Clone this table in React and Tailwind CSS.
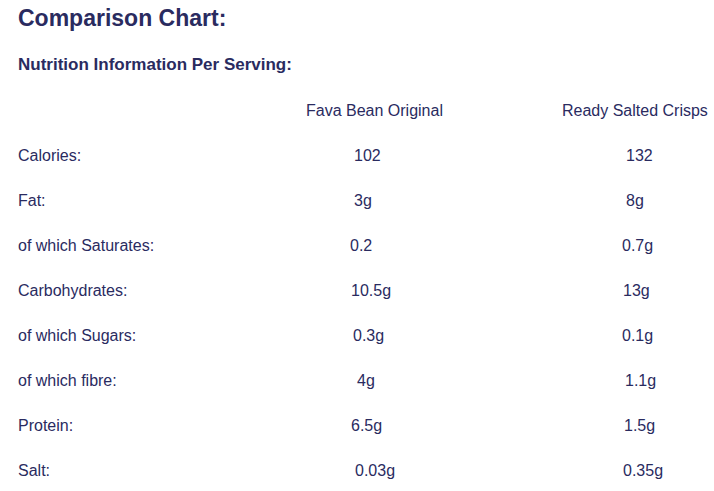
import React from 'react';

const rows = [
    { label: 'Calories:', a: '102', aPad: 'pl-[48px]', b: '132', bPad: 'pl-[64px]' },
    { label: 'Fat:', a: '3g', aPad: 'pl-[48px]', b: '8g', bPad: 'pl-[64px]' },
    { label: 'of which Saturates:', a: '0.2', aPad: 'pl-[44px]', b: '0.7g', bPad: 'pl-[60px]' },
    { label: 'Carbohydrates:', a: '10.5g', aPad: 'pl-[45px]', b: '13g', bPad: 'pl-[61px]' },
    { label: 'of which Sugars:', a: '0.3g', aPad: 'pl-[47px]', b: '0.1g', bPad: 'pl-[60px]' },
    { label: 'of which fibre:', a: '4g', aPad: 'pl-[51px]', b: '1.1g', bPad: 'pl-[63px]' },
    { label: 'Protein:', a: '6.5g', aPad: 'pl-[45px]', b: '1.5g', bPad: 'pl-[62px]' },
    { label: 'Salt:', a: '0.03g', aPad: 'pl-[49px]', b: '0.35g', bPad: 'pl-[61px]' },
];

const App = () => {
    return (
        <div className="bg-white text-[#2a2b5f] w-[714px] h-[491px] overflow-hidden pl-[18px] font-['Liberation_Sans',sans-serif]">
            <h1 className="text-[23px] leading-[37px] font-bold">Comparison Chart:</h1>
            <h2 className="mt-[18px] text-[17px] leading-[20px] font-bold">Nutrition Information Per Serving:</h2>

            {/* Table */}
            <div className="mt-[13px] grid grid-cols-[288px_256px_1fr] text-[16px]">
                <div className="h-[45px]" />
                <div className="h-[45px] flex items-center">Fava Bean Original</div>
                <div className="h-[45px] flex items-center">Ready Salted Crisps</div>
                {rows.map((row, index) => (
                    <React.Fragment key={index}>
                        <div className="h-[45px] flex items-center">{row.label}</div>
                        <div className={`h-[45px] flex items-center ${row.aPad}`}>{row.a}</div>
                        <div className={`h-[45px] flex items-center ${row.bPad}`}>{row.b}</div>
                    </React.Fragment>
                ))}
            </div>
        </div>
    );
};

export default App;
